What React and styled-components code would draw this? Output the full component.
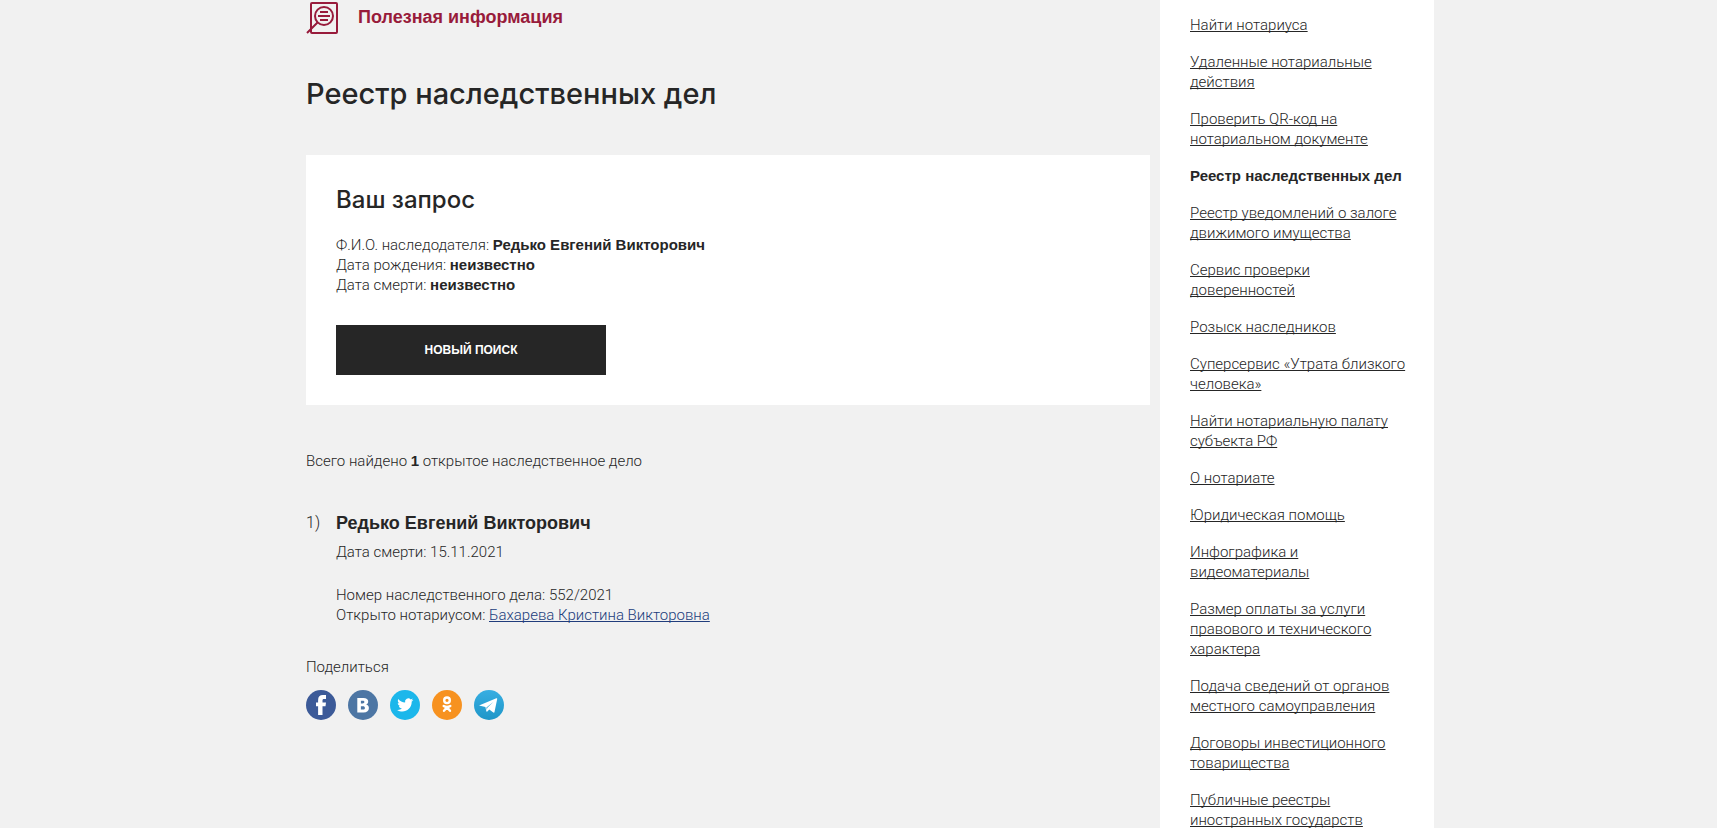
import React from "react";
import styled, { createGlobalStyle } from "styled-components";

const GlobalStyle = createGlobalStyle`
  * {
    box-sizing: border-box;
  }

  body {
    margin: 0;
    background: #f1f1f1;
    color: #262626;
    font-family: Roboto, "Liberation Sans", sans-serif;
    font-size: 15px;
    font-weight: 300;
    line-height: 20px;
  }
`;

const Container = styled.div`
  display: flex;
  align-items: stretch;
  gap: 10px;
  max-width: 1151px;
  min-height: 100vh;
  margin: 0 auto;
  padding-left: 23px;
`;

const Main = styled.main`
  flex: 1;
  min-width: 0;
`;

const Section = styled.div`
  display: flex;
  align-items: center;
  gap: 19px;
  height: 34px;
`;

const SectionIcon = styled.svg`
  width: 33px;
  height: 34px;
`;

const SectionTitle = styled.div`
  color: #981b3b;
  font: 700 18px/34px "Liberation Sans", sans-serif;
`;

const Title = styled.h1`
  margin: 40px 0 41px;
  font: 500 29px/40px Inter, "Liberation Sans", sans-serif;
`;

const Card = styled.section`
  padding: 30px;
  background: #fff;
`;

const CardTitle = styled.h2`
  margin: 0 0 20px;
  font: 500 24px/30px Inter, "Liberation Sans", sans-serif;
`;

const Line = styled.p`
  margin: 0;
`;

const Strong = styled.b`
  font-family: "Liberation Sans", sans-serif;
  font-weight: 700;
`;

const Button = styled.button`
  display: block;
  width: 270px;
  height: 50px;
  margin-top: 30px;
  border: 0;
  background: #262626;
  color: #fff;
  font: 700 12px/20px "Liberation Sans", sans-serif;
  text-transform: uppercase;
  cursor: pointer;
`;

const Total = styled.p`
  margin: 46px 0 40px;
`;

const Results = styled.ol`
  margin: 0;
  padding: 0;
  list-style: none;
  counter-reset: result;
`;

const Result = styled.li`
  display: grid;
  grid-template-columns: 30px 1fr;
  counter-increment: result;

  &::before {
    content: counter(result) ")";
    font-size: 16px;
    line-height: 24px;
  }
`;

const Name = styled.h3`
  margin: 0 0 7px;
  font: 700 18px/24px "Liberation Sans", sans-serif;
`;

const Details = styled.div`
  margin-top: 23px;
`;

const NotaryLink = styled.a`
  color: #213d7c;
  text-decoration: underline;
  text-decoration-skip-ink: none;
`;

const Share = styled.div`
  margin-top: 32px;
`;

const ShareList = styled.div`
  display: flex;
  gap: 12px;
  margin-top: 13px;
`;

const ShareLink = styled.a`
  width: 30px;
  height: 30px;
  border-radius: 50%;
  background: ${(props) => props.$background};

  svg {
    display: block;
    width: 30px;
    height: 30px;
    fill: #fff;
  }
`;

const Sidebar = styled.nav`
  width: 274px;
  padding: 15px 20px 17px 30px;
  background: #fff;
`;

const Menu = styled.ul`
  display: flex;
  flex-direction: column;
  gap: 17px;
  margin: 0;
  padding: 0;
  list-style: none;
`;

const MenuLink = styled.a`
  color: #262626;
  text-decoration: underline;
  text-decoration-skip-ink: none;
`;

const menu = [
  "Найти нотариуса",
  "Удаленные нотариальные действия",
  "Проверить QR-код на нотариальном документе",
  "Реестр наследственных дел",
  "Реестр уведомлений о залоге движимого имущества",
  "Сервис проверки доверенностей",
  "Розыск наследников",
  "Суперсервис «Утрата близкого человека»",
  "Найти нотариальную палату субъекта РФ",
  "О нотариате",
  "Юридическая помощь",
  "Инфографика и видеоматериалы",
  "Размер оплаты за услуги правового и технического характера",
  "Подача сведений от органов местного самоуправления",
  "Договоры инвестиционного товарищества",
  "Публичные реестры иностранных государств",
];

const current = "Реестр наследственных дел";

const networks = [
  {
    name: "Facebook",
    background: "#3c5a98",
    icon: <path d="M12.100 25v-8.700H10v-3.900h2.100V10c0-3.300 1.700-4.900 4.700-4.900h3.200v3.800h-1.900c-1.200 0-1.600.5-1.600 1.500v2h3.500l-.5 3.900h-3V25z" />,
  },
  {
    name: "ВКонтакте",
    background: "#4d76a4",
    icon: (
      <path
        fillRule="evenodd"
        d="M9.300 8h6.200c3 0 4.700 1.300 4.700 3.500 0 1.500-.8 2.500-2 3 1.700.4 2.700 1.700 2.700 3.500 0 2.800-2 4.500-5.300 4.500H9.300zM12.900 10.800v2.700h1.700c1.200 0 1.800-.5 1.800-1.400s-.6-1.300-1.700-1.300zM12.900 16.300v3.300h2c1.300 0 2-.6 2-1.700s-.7-1.600-2-1.600z"
      />
    ),
  },
  {
    name: "Twitter",
    background: "#1cb7eb",
    icon: (
      <path d="M23.300 9.900c-.6.300-1.200.5-1.900.5.700-.4 1.200-1 1.400-1.800-.6.400-1.300.6-2.100.8a3.300 3.300 0 0 0-5.600 3c-2.700-.1-5.200-1.400-6.800-3.500-.9 1.500-.4 3.400 1 4.400-.5 0-1-.2-1.500-.4 0 1.600 1.100 2.900 2.600 3.200-.5.1-1 .1-1.500.1.400 1.300 1.600 2.200 3.100 2.300a6.600 6.600 0 0 1-4.900 1.400c6.400 4 14.600-.2 14.600-7.900v-.5c.6-.4 1.200-1 1.600-1.600z" />
    ),
  },
  {
    name: "Одноклассники",
    background: "#f79220",
    icon: (
      <g fill="none" stroke="#fff" strokeWidth="2.400" strokeLinecap="round">
        <circle cx="15" cy="10.300" r="2.800" />
        <path d="M11.700 15.900c2.100 1.300 4.500 1.300 6.600 0M15 17.300l-3 3.500M15 17.300l3 3.500" />
      </g>
    ),
  },
  {
    name: "Telegram",
    background: "linear-gradient(#37aee2, #1e96c8)",
    icon: (
      <path
        fillRule="evenodd"
        d="M5 15.400 22.300 8.300c.7-.3 1 .1.900.7l-2.700 13c-.1.700-.6.800-1.200.5l-4-3-2 2c-.5.400-.9.200-1-.4l-.9-4zM12.400 17.400l.4 2.600.5-2.200 6.300-6.100z"
      />
    ),
  },
];

const App = () => {
  return (
    <>
      <GlobalStyle />
      <Container>
        <Main>
          <Section>
            <SectionIcon
              viewBox="0 0 33 34"
              fill="none"
              stroke="#981b3b"
              strokeWidth="2"
              aria-hidden="true"
            >
              <rect x="5" y="3" width="26" height="30" rx="1" />
              <circle cx="18" cy="16" r="9" />
              <path d="M14 12h8M12 16h12M14 20h8M11.500 22.500 1 33" />
            </SectionIcon>
            <SectionTitle>Полезная информация</SectionTitle>
          </Section>
          <Title>Реестр наследственных дел</Title>
          <Card>
            <CardTitle>Ваш запрос</CardTitle>
            <Line>
              Ф.И.О. наследодателя: <Strong>Редько Евгений Викторович</Strong>
            </Line>
            <Line>
              Дата рождения: <Strong>неизвестно</Strong>
            </Line>
            <Line>
              Дата смерти: <Strong>неизвестно</Strong>
            </Line>
            <Button type="button">Новый поиск</Button>
          </Card>
          <Total>
            Всего найдено <Strong>1</Strong> открытое наследственное дело
          </Total>
          <Results>
            <Result>
              <div>
                <Name>Редько Евгений Викторович</Name>
                <Line>Дата смерти: 15.11.2021</Line>
                <Details>
                  <Line>Номер наследственного дела: 552/2021</Line>
                  <Line>
                    Открыто нотариусом:{" "}
                    <NotaryLink href="#notary">
                      Бахарева Кристина Викторовна
                    </NotaryLink>
                  </Line>
                </Details>
              </div>
            </Result>
          </Results>
          <Share>
            <Line>Поделиться</Line>
            <ShareList>
              {networks.map(({ name, background, icon }) => (
                <ShareLink
                  key={name}
                  href="#share"
                  aria-label={name}
                  $background={background}
                >
                  <svg viewBox="0 0 30 30">{icon}</svg>
                </ShareLink>
              ))}
            </ShareList>
          </Share>
        </Main>
        <Sidebar>
          <Menu>
            {menu.map((item) => (
              <li key={item}>
                {item === current ? (
                  <Strong>{item}</Strong>
                ) : (
                  <MenuLink href="#menu">{item}</MenuLink>
                )}
              </li>
            ))}
          </Menu>
        </Sidebar>
      </Container>
    </>
  );
};

export default App;
